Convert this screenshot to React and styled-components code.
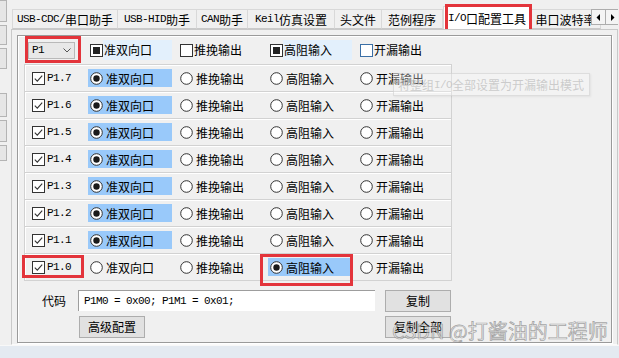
import React from 'react';
import styled, { createGlobalStyle } from 'styled-components';

const GlobalStyle = createGlobalStyle`
    html, body {
        margin: 0;
        padding: 0;
        background: #f0f0f0;
    }
    body {
        font-family: "Noto Sans CJK SC", "Liberation Sans", sans-serif;
        font-size: 12px;
        color: #000;
    }
`;

const Window = styled.div`
    position: relative;
    display: flex;
    flex-direction: column;
    width: 619px;
    height: 358px;
    overflow: hidden;
    background: #f0f0f0;
`;

const Top = styled.div`
    display: flex;
    height: 345px;
`;

const LeftStrip = styled.div`
    flex: none;
    width: 9px;
    display: flex;
    flex-direction: column;
    overflow: hidden;
`;

const StubButton = styled.div`
    flex: none;
    margin-top: ${(p) => p.$gap}px;
    margin-left: -12px;
    width: 19px;
    height: ${(p) => p.$h}px;
    background: #e6e6e6;
    border: 1px solid #b4b4b4;
    box-sizing: border-box;
`;

const Main = styled.div`
    display: flex;
    flex-direction: column;
    margin-left: 2px;
    width: 607px;
`;

const TabBar = styled.div`
    position: relative;
    display: flex;
    align-items: flex-end;
    height: 29px;
    padding-left: 1px;
    overflow: hidden;
    flex: none;
    z-index: 1;
`;

const Tab = styled.div`
    position: relative;
    flex: none;
    box-sizing: border-box;
    width: ${(p) => p.$w}px;
    height: ${(p) => (p.$active ? 24 : 20)}px;
    margin-bottom: ${(p) => (p.$active ? -1 : 0)}px;
    display: flex;
    align-items: center;
    justify-content: center;
    white-space: nowrap;
    background: ${(p) => (p.$active ? '#ffffff' : '#f0f0f0')};
    border: 1px solid #d9d9d9;
    border-bottom: ${(p) => (p.$active ? 'none' : '1px solid #c9c9c9')};
    border-left: ${(p) => (p.$first || p.$active ? '1px solid #d9d9d9' : 'none')};
    line-height: 1;
    padding-top: ${(p) => (p.$active ? 0 : 1)}px;
`;

const ScrollPair = styled.div`
    position: absolute;
    top: 9px;
    right: -2px;
    display: flex;
`;

const ScrollButton = styled.div`
    width: 15px;
    height: 16px;
    box-sizing: border-box;
    background: #f4f4f4;
    border: 1px solid #adadad;
    margin-left: -1px;
    display: flex;
    align-items: center;
    justify-content: center;
`;

const Half = styled.span`
    font-family: "Liberation Mono", "DejaVu Sans Mono", monospace;
    font-size: 11px;
    letter-spacing: -0.6px;
`;

const Panel = styled.div`
    flex: 1;
    display: flex;
    box-sizing: border-box;
    border: 1px solid #c9c9c9;
    border-bottom-color: #fbfbfb;
    padding: 5px 5px 1px 5px;
`;

const GroupBox = styled.div`
    flex: 1;
    box-sizing: border-box;
    border: 1px solid #9a9a9a;
    box-shadow: 1px 1px 0 #ffffff, inset 1px 1px 0 #ffffff;
    padding-left: 6px;
`;

const Grid = styled.div`
    display: grid;
    grid-template-columns: 63px 90px 90px 90px 93px;
    align-items: center;
`;

const Header = styled(Grid)`
    height: 28px;
    padding-left: 1px;
`;

const Rows = styled.div`
    width: 428px;
    border-bottom: 1px solid #d2d2d2;
`;

const Row = styled(Grid)`
    height: 26px;
    border: 1px solid #d2d2d2;
    border-bottom: none;
    box-shadow: inset 1px 1px 0 #ffffff;
`;

const Marked = styled.div`
    position: relative;
    display: inline-flex;
    width: fit-content;
`;

const RedBox = styled.div`
    position: absolute;
    top: ${(p) => p.$t}px;
    left: ${(p) => p.$l}px;
    right: ${(p) => p.$r}px;
    bottom: ${(p) => p.$b}px;
    border: 3px solid #e3343b;
    pointer-events: none;
    z-index: 3;
`;

const Dropdown = styled.div`
    margin-left: 3px;
    width: 47px;
    height: 17px;
    box-sizing: border-box;
    background: #e8e8e8;
    border: 1px solid #b9b9b9;
    display: flex;
    align-items: center;
    justify-content: space-between;
    padding: 0 3px 0 3px;
`;

const HeadItem = styled.div`
    display: flex;
    align-items: center;
    width: 84px;
    height: 20px;
    padding-left: 2px;
    box-sizing: border-box;
`;

const HeadLabel = styled.span`
    flex: 1;
    height: 20px;
    line-height: 20px;
    padding-left: 1px;
    background: ${(p) => (p.$on ? '#e3f0fc' : 'transparent')};
`;

const PinCell = styled.div`
    display: flex;
    align-items: center;
    height: 16px;
    padding-left: 7px;
    gap: 2px;
`;

const Option = styled.div`
    display: flex;
    align-items: center;
    width: 84px;
    height: 18px;
    padding-left: 2px;
    box-sizing: border-box;
    gap: 3px;
    background: ${(p) => (p.$on ? '#99c9fa' : 'transparent')};
`;

const Footer = styled.div`
    display: grid;
    grid-template-columns: 44px 297px 66px;
    grid-auto-rows: 21px;
    column-gap: 10px;
    row-gap: 5px;
    margin-top: 9px;
    align-items: center;
`;

const FieldLabel = styled.span`
    padding-left: 18px;
    white-space: nowrap;
`;

const CodeField = styled.div`
    height: 21px;
    box-sizing: border-box;
    background: #ffffff;
    border-top: 1px solid #9d9d9d;
    border-left: 1px solid #9d9d9d;
    padding-left: 5px;
    display: flex;
    align-items: center;
    white-space: pre;
`;

const Button = styled.div`
    height: 22px;
    width: 66px;
    box-sizing: border-box;
    background: #e1e1e1;
    border: 1px solid #adadad;
    display: flex;
    align-items: center;
    justify-content: center;
    margin-left: ${(p) => p.$indent || 0}px;
`;

const BottomStrip = styled.div`
    flex: 1;
    background: #e4eaf1;
    border-top: 1px solid #f8f8f8;
`;

const Tooltip = styled.div`
    position: absolute;
    left: 393px;
    top: 73px;
    width: 197px;
    height: 23px;
    box-sizing: border-box;
    background: rgba(248, 248, 248, 0.35);
    border: 1px solid rgba(200, 200, 200, 0.5);
    box-shadow: 1px 1px 2px rgba(0, 0, 0, 0.06);
    color: rgba(190, 190, 190, 0.75);
    display: flex;
    align-items: center;
    padding-left: 4px;
    white-space: nowrap;
    z-index: 4;
`;

const Watermark = styled.div`
    position: absolute;
    left: 392px;
    top: 318px;
    font-size: 20px;
    line-height: 26px;
    white-space: nowrap;
    color: rgba(225, 225, 225, 0.5);
    -webkit-text-stroke: 0.7px rgba(120, 120, 120, 0.65);
    z-index: 5;
`;

const mix = (text) =>
    text.split(/([\x00-\x7f]+)/).map((part, i) =>
        /^[\x00-\x7f]+$/.test(part) ? <Half key={i}>{part}</Half> : part
    );

const CheckBox = ({ state, hot }) => (
    <svg width="13" height="13" viewBox="0 0 13 13" style={{ flex: 'none' }}>
        <rect x="0.5" y="0.5" width="12" height="12" fill="#fff" stroke={hot ? '#3b6fa6' : '#333'} />
        {state === 'check' && (
            <polyline points="2.8,6.6 5.3,9.2 10.2,3.6" fill="none" stroke="#333" strokeWidth="1.1" />
        )}
        {state === 'fill' && <rect x="3" y="3" width="7" height="7" fill="#222" />}
    </svg>
);

const Radio = ({ on }) => (
    <svg width="13" height="13" viewBox="0 0 13 13" style={{ flex: 'none' }}>
        <circle cx="6.5" cy="6.5" r="5.8" fill="#fff" stroke="#333" />
        {on && <circle cx="6.5" cy="6.5" r="3.2" fill="#1a1a1a" />}
    </svg>
);

const TABS = [
    { label: 'USB-CDC/串口助手', w: 106 },
    { label: 'USB-HID助手', w: 79 },
    { label: 'CAN助手', w: 51 },
    { label: 'Keil仿真设置', w: 87 },
    { label: '头文件', w: 47 },
    { label: '范例程序', w: 61 },
    { label: 'I/O口配置工具', w: 88, active: true },
    { label: '串口波特率', w: 70 },
];

const MODES = ['准双向口', '推挽输出', '高阻输入', '开漏输出'];
const HEAD = [
    { state: 'fill', on: true },
    { state: 'none' },
    { state: 'fill', on: true },
    { state: 'none', hot: true },
];
const PINS = [7, 6, 5, 4, 3, 2, 1, 0].map((n) => ({ name: `P1.${n}`, mode: n === 0 ? 2 : 0 }));
const STUBS = [
    { gap: 0, h: 22 },
    { gap: 3, h: 20 },
    { gap: 3, h: 21 },
    { gap: 24, h: 24 },
    { gap: 3, h: 22 },
    { gap: 3, h: 16 },
];

const App = () => {
    const renderTab = (t, i) => {
        const tab = (
            <Tab key={t.label} $w={t.w} $active={t.active} $first={i === 0}>
                {mix(t.label)}
            </Tab>
        );
        if (!t.active) {
            return tab;
        }
        return (
            <Marked key={t.label}>
                {tab}
                <RedBox $t={-2} $l={2} $r={-1} $b={-3} />
            </Marked>
        );
    };

    return (
        <Window>
            <GlobalStyle />
            <Top>
                <LeftStrip>
                    {STUBS.map((s, i) => (
                        <StubButton key={i} $gap={s.gap} $h={s.h} />
                    ))}
                </LeftStrip>
                <Main>
                    <TabBar>
                        {TABS.map(renderTab)}
                        <ScrollPair>
                            <ScrollButton>
                                <svg width="5" height="7" viewBox="0 0 5 7">
                                    <polygon points="4,0 4,7 0.5,3.5" fill="#000" />
                                </svg>
                            </ScrollButton>
                            <ScrollButton>
                                <svg width="5" height="7" viewBox="0 0 5 7">
                                    <polygon points="1,0 1,7 4.5,3.5" fill="#000" />
                                </svg>
                            </ScrollButton>
                        </ScrollPair>
                    </TabBar>
                    <Panel>
                        <GroupBox>
                            <Header>
                                <Marked>
                                    <Dropdown>
                                        <Half>P1</Half>
                                        <svg width="8" height="5" viewBox="0 0 8 5">
                                            <polyline points="0.5,0.5 4,4 7.5,0.5" fill="none" stroke="#555" />
                                        </svg>
                                    </Dropdown>
                                    <RedBox $t={-6} $l={0} $r={-6} $b={-4} />
                                </Marked>
                                {MODES.map((m, i) => (
                                    <HeadItem key={m}>
                                        <CheckBox state={HEAD[i].state} hot={HEAD[i].hot} />
                                        <HeadLabel $on={HEAD[i].on}>{m}</HeadLabel>
                                    </HeadItem>
                                ))}
                            </Header>
                            <Rows>
                                {PINS.map((pin) => {
                                    const last = pin.name === 'P1.0';
                                    const cell = (
                                        <PinCell>
                                            <CheckBox state="check" />
                                            <Half>{pin.name}</Half>
                                        </PinCell>
                                    );
                                    return (
                                        <Row key={pin.name}>
                                            {last ? (
                                                <Marked>
                                                    {cell}
                                                    <RedBox $t={-4} $l={-3} $r={-13} $b={-3} />
                                                </Marked>
                                            ) : (
                                                cell
                                            )}
                                            {MODES.map((m, i) => {
                                                const opt = (
                                                    <Option key={m} $on={pin.mode === i}>
                                                        <Radio on={pin.mode === i} />
                                                        {m}
                                                    </Option>
                                                );
                                                if (last && i === 2) {
                                                    return (
                                                        <Marked key={m}>
                                                            {opt}
                                                            <RedBox $t={-4} $l={-8} $r={-1} $b={-10} />
                                                        </Marked>
                                                    );
                                                }
                                                return opt;
                                            })}
                                        </Row>
                                    );
                                })}
                            </Rows>
                            <Footer>
                                <FieldLabel>代码</FieldLabel>
                                <CodeField>
                                    <Half>P1M0 = 0x00; P1M1 = 0x01;</Half>
                                </CodeField>
                                <Button>复制</Button>
                                <span />
                                <Button $indent={1}>高级配置</Button>
                                <Button>复制全部</Button>
                            </Footer>
                        </GroupBox>
                    </Panel>
                </Main>
            </Top>
            <BottomStrip />
            <Tooltip>{mix('将整组I/O全部设置为开漏输出模式')}</Tooltip>
            <Watermark>CSDN @打酱油的工程师</Watermark>
        </Window>
    );
};

export default App;
